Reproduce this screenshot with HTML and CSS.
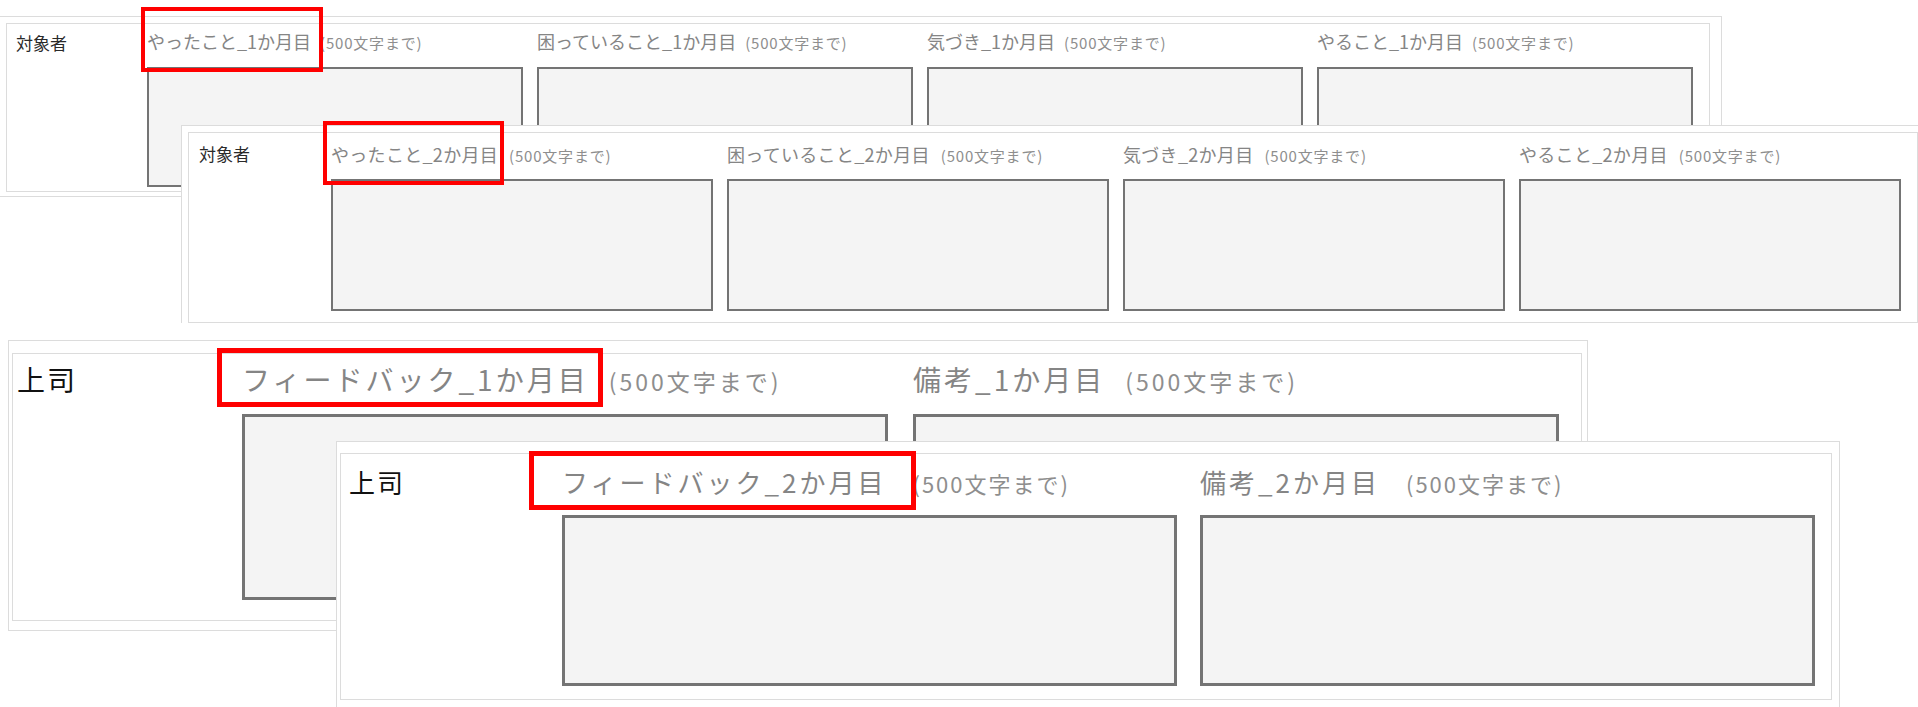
FILE: index.html
```html
<!DOCTYPE html>
<html lang="ja">
<head>
    <meta charset="UTF-8">
    <meta name="viewport" content="width=device-width, initial-scale=1.0">
    <title>面談シート 入力欄</title>
    <link rel="stylesheet" href="styles.css">
</head>
<body>

    <!-- 対象者 1か月目 -->
    <div class="shot shot-a1">
        <div class="form">
            <div class="who">対象者</div>
            <div class="field">
                <div class="label">やったこと_1か月目<small>(500文字まで)</small></div>
                <div class="box"></div>
            </div>
            <div class="field">
                <div class="label">困っていること_1か月目<small>(500文字まで)</small></div>
                <div class="box"></div>
            </div>
            <div class="field">
                <div class="label">気づき_1か月目<small>(500文字まで)</small></div>
                <div class="box"></div>
            </div>
            <div class="field">
                <div class="label">やること_1か月目<small>(500文字まで)</small></div>
                <div class="box"></div>
            </div>
        </div>
        <div class="mark"></div>
    </div>

    <!-- 対象者 2か月目 -->
    <div class="shot shot-a2">
        <div class="form">
            <div class="who">対象者</div>
            <div class="field">
                <div class="label">やったこと_2か月目<small>(500文字まで)</small></div>
                <div class="box"></div>
            </div>
            <div class="field">
                <div class="label">困っていること_2か月目<small>(500文字まで)</small></div>
                <div class="box"></div>
            </div>
            <div class="field">
                <div class="label">気づき_2か月目<small>(500文字まで)</small></div>
                <div class="box"></div>
            </div>
            <div class="field">
                <div class="label">やること_2か月目<small>(500文字まで)</small></div>
                <div class="box"></div>
            </div>
        </div>
        <div class="mark"></div>
    </div>

    <!-- 上司 1か月目 -->
    <div class="shot shot-b1">
        <div class="form">
            <div class="who">上司</div>
            <div class="field">
                <div class="label">フィードバック_1か月目<small>(500文字まで)</small></div>
                <div class="box"></div>
            </div>
            <div class="field">
                <div class="label">備考_1か月目<small>(500文字まで)</small></div>
                <div class="box"></div>
            </div>
        </div>
        <div class="mark"></div>
    </div>

    <!-- 上司 2か月目 -->
    <div class="shot shot-b2">
        <div class="form">
            <div class="who">上司</div>
            <div class="field">
                <div class="label">フィードバック_2か月目<small>(500文字まで)</small></div>
                <div class="box"></div>
            </div>
            <div class="field">
                <div class="label">備考_2か月目<small>(500文字まで)</small></div>
                <div class="box"></div>
            </div>
        </div>
        <div class="mark"></div>
    </div>

</body>
</html>
```

FILE: styles.css
```css
body { margin: 0; width: 1918px; height: 707px; position: relative; overflow: hidden; background: #fff; font-family: "Noto Sans CJK JP", sans-serif; }

/* each screenshot sits on the canvas like a window */
.shot { position: absolute; box-sizing: border-box; background: #fff; border: 1px solid #dcdcdc; }
.form { display: flex; box-sizing: border-box; border: 1px solid #dcdcdc; overflow: hidden; }
.who { flex: none; box-sizing: border-box; color: #2a2a2a; }
.field { flex: none; }
.label { color: #858585; white-space: nowrap; }
.label small { color: #8e8e8e; line-height: 1; }
.box { box-sizing: border-box; background: #f4f4f4; border: 2px solid #747474; }
.mark { position: absolute; box-sizing: border-box; border: 4px solid #ff0000; }

/* 対象者 1か月目 */
.shot-a1 { left: -6px; top: 16px; width: 1728px; padding: 6px 11px 4px 11px; }
.shot-a1 .form { height: 169px; padding-top: 5px; gap: 14px; }
.shot-a1 .who { width: 126px; padding-left: 9px; font-size: 17px; line-height: 24px; padding-top: 2px; }
.shot-a1 .field { width: 376px; }
.shot-a1 .label { height: 24px; font-size: 18px; line-height: 24px; }
.shot-a1 .label small { font-size: 15px; margin-left: 9px; letter-spacing: 0.8px; }
.shot-a1 .box { margin-top: 14px; height: 120px; }
.shot-a1 .mark { left: 146px; top: -10px; width: 182px; height: 65px; }

/* 対象者 2か月目 */
.shot-a2 { left: 181px; top: 125px; padding: 6px 6px 0 6px; border-bottom: none; }
.shot-a2 .form { width: 1730px; height: 191px; padding-top: 9px; gap: 14px; }
.shot-a2 .who { width: 128px; padding-left: 10px; font-size: 17px; line-height: 24px; }
.shot-a2 .field { width: 382px; }
.shot-a2 .label { height: 24px; font-size: 18px; line-height: 24px; letter-spacing: 0.3px; }
.shot-a2 .label small { font-size: 15px; margin-left: 11px; letter-spacing: 0.8px; }
.shot-a2 .box { margin-top: 13px; height: 132px; }
.shot-a2 .mark { left: 141px; top: -5px; width: 181px; height: 64px; }

/* 上司 1か月目 */
.shot-b1 { left: 8px; top: 340px; padding: 12px 5px 9px 3px; }
.shot-b1 .form { width: 1570px; height: 268px; padding-top: 7px; gap: 25px; }
.shot-b1 .who { width: 204px; padding-left: 4px; font-size: 28px; line-height: 36px; color: #111; letter-spacing: 2px; }
.shot-b1 .field { width: 646px; }
.shot-b1 .label { height: 36px; font-size: 28px; line-height: 36px; letter-spacing: 3px; }
.shot-b1 .label small { font-size: 23px; margin-left: 20px; letter-spacing: 3px; }
.shot-b1 .box { margin-top: 17px; height: 186px; border-width: 3px; }
.shot-b1 .mark { left: 208px; top: 7px; width: 386px; height: 59px; border-width: 5px; }

/* 上司 2か月目 */
.shot-b2 { left: 336px; top: 441px; padding: 11px 7px 20px 3px; }
.shot-b2 .form { width: 1492px; height: 247px; padding-top: 11px; gap: 23px; }
.shot-b2 .who { width: 198px; padding-left: 8px; font-size: 26px; line-height: 34px; color: #111; letter-spacing: 2px; }
.shot-b2 .field { width: 615px; }
.shot-b2 .label { height: 34px; font-size: 26px; line-height: 34px; letter-spacing: 3px; }
.shot-b2 .label small { font-size: 22px; margin-left: 26px; letter-spacing: 2px; }
.shot-b2 .box { margin-top: 16px; height: 171px; border-width: 3px; }
.shot-b2 .mark { left: 192px; top: 9px; width: 387px; height: 59px; border-width: 5px; }
```
